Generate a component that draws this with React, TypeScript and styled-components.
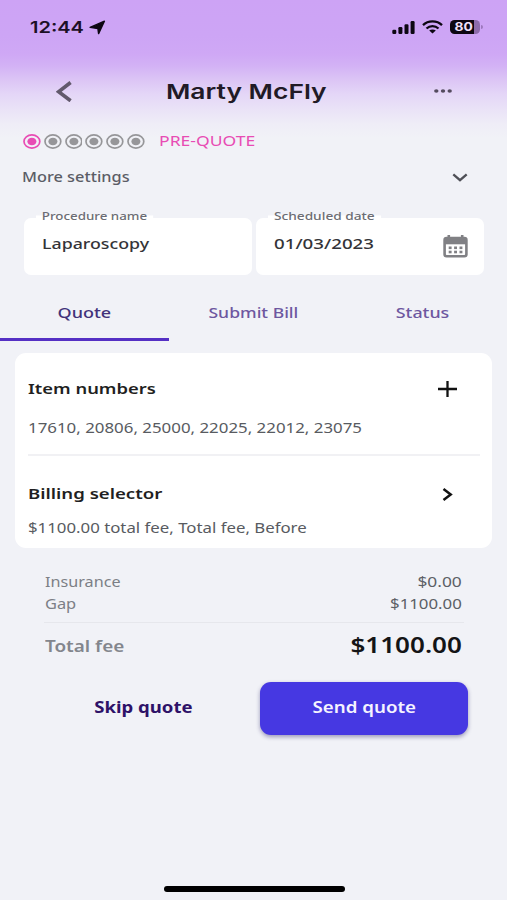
import React from 'react';
import styled, { createGlobalStyle, css } from 'styled-components';

const GlobalStyle = createGlobalStyle`
  *, *::before, *::after { box-sizing: border-box; }
  body { margin: 0; background: #f1f2f7; }
  button { appearance: none; border: 0; background: none; padding: 0; margin: 0; font: inherit; color: inherit; }
`;

const Screen = styled.main`
  display: flex;
  flex-direction: column;
  width: 507px;
  height: 900px;
  overflow: hidden;
  background: linear-gradient(
    180deg,
    #cda3f5 0, #cda5f5 36px, #cfa8f5 54px, #d3b2f5 66px, #dcc5f5 80px,
    #e4d6f7 94px, #eae3f7 110px, #efedf7 124px, #f1f2f7 138px
  );
  font-family: 'Noto Sans', 'Liberation Sans', sans-serif;
  color: #1b1a20;
`;

type WideProps = { $wide: number; $from?: 'left' | 'center' | 'right' };

const wide = css<WideProps>`
  display: inline-block;
  white-space: nowrap;
  transform: scaleX(${(p) => p.$wide});
  transform-origin: ${(p) => p.$from ?? 'left'} center;
`;

const StatusBar = styled.div`
  display: flex;
  align-items: center;
  justify-content: space-between;
  height: 54px;
  padding: 0 24px 0 30px;
`;

const Clock = styled.div`
  display: flex;
  align-items: center;
  width: 76px;
  justify-content: space-between;
`;

const Time = styled.span<WideProps>`
  ${wide}
  font: 600 16px/20px Inter, sans-serif;
  color: #1c1026;
`;

const Indicators = styled.div`
  display: flex;
  align-items: center;
  gap: 7px;
`;

const Header = styled.header`
  display: grid;
  grid-template-columns: 80px 1fr 80px;
  align-items: center;
  height: 74px;
  padding: 0 24px;

  svg { display: block; margin: 0 auto; }
`;

const IconButton = styled.button`
  display: block;
`;

const Title = styled.h1<WideProps>`
  ${wide}
  margin: 1px 14px 0 0;
  justify-self: center;
  font: 600 20.5px/28px Inter, sans-serif;
  color: #211a26;
`;

const Progress = styled.div`
  display: flex;
  align-items: center;
  gap: 3px;
  height: 26px;
  padding-left: 23px;
`;

const StageName = styled.span<WideProps>`
  ${wide}
  margin-left: 11px;
  font-size: 14px;
  line-height: 20px;
  color: #e84cb4;
`;

const Settings = styled.button`
  display: flex;
  align-items: center;
  justify-content: space-between;
  height: 46px;
  padding: 0 39px 0 22px;
`;

const SettingsLabel = styled.span<WideProps>`
  ${wide}
  font-size: 14px;
  font-weight: 500;
  line-height: 20px;
  color: #5b5d66;
`;

const Fields = styled.div`
  display: grid;
  grid-template-columns: 1fr 1fr;
  gap: 4px;
  padding: 18px 23px 0 24px;
`;

const Field = styled.div`
  display: flex;
  justify-content: space-between;
  height: 57px;
  padding: 0 16px 0 18px;
  border-radius: 7px;
  background: #fff;
`;

const FieldText = styled.div`
  display: flex;
  flex-direction: column;
  align-items: flex-start;
  margin-top: -10px;
`;

const FieldLabel = styled.span<WideProps>`
  ${wide}
  margin-left: -6px;
  padding: 0 5px;
  border-radius: 5px;
  background: linear-gradient(180deg, transparent 40%, #fff 52%);
  font-size: 11.5px;
  font-weight: 500;
  line-height: 16px;
  color: #6c6d74;
`;

const FieldValue = styled.span<WideProps>`
  ${wide}
  margin-top: 9px;
  font-size: 14.5px;
  font-weight: 500;
  line-height: 20px;
  color: #343438;
`;

const CalendarSlot = styled.span`
  display: flex;
  align-items: center;
`;

const Tabs = styled.nav`
  display: grid;
  grid-template-columns: repeat(3, 1fr);
  height: 66px;
`;

const Tab = styled.button<{ $active?: boolean }>`
  display: flex;
  align-items: center;
  justify-content: center;
  padding-top: 11px;
  border-bottom: 3px solid ${(p) => (p.$active ? '#5530c4' : 'transparent')};
  color: ${(p) => (p.$active ? '#42327a' : '#6d57a0')};
`;

const TabLabel = styled.span<WideProps>`
  ${wide}
  font-size: 15px;
  font-weight: 500;
  line-height: 20px;
`;

const Card = styled.section`
  margin: 12px 15px 0;
  height: 195px;
  padding: 0 12px 0 13px;
  border-radius: 11px;
  background: #fff;
`;

const Entry = styled.div<{ $top: number; $height: number; $gap: number }>`
  display: flex;
  flex-direction: column;
  gap: ${(p) => p.$gap}px;
  height: ${(p) => p.$height}px;
  padding-top: ${(p) => p.$top}px;

  & + & { border-top: 2px solid #f1f1f4; }
`;

const EntryHead = styled.div`
  display: flex;
  align-items: center;
  justify-content: space-between;
  height: 20px;
  padding-right: 23px;

  svg { margin-top: 2px; }
`;

const EntryTitle = styled.h2<WideProps>`
  ${wide}
  margin: 0;
  font-size: 15px;
  font-weight: 600;
  line-height: 20px;
  color: #1f1f22;
`;

const EntryDetail = styled.p<WideProps>`
  ${wide}
  margin: 0;
  align-self: flex-start;
  font-size: 14px;
  line-height: 20px;
  color: #585b61;
`;

const Summary = styled.section`
  display: flex;
  flex-direction: column;
  margin: 23px 43px 0 44px;
`;

const FeeLine = styled.div`
  display: flex;
  justify-content: space-between;
  height: 21.5px;
  padding: 0 2px 0 1px;
  font-size: 14px;
  line-height: 21px;
`;

const FeeName = styled.span<WideProps>`
  ${wide}
  color: #7c7f86;
`;

const FeeAmount = styled.span<WideProps>`
  ${wide}
  color: #5c5f66;
`;

const TotalLine = styled.div`
  display: flex;
  align-items: center;
  justify-content: space-between;
  height: 47px;
  margin-top: 8px;
  padding: 0 2px 0 1px;
  border-top: 1px solid #e6e7ec;
`;

const TotalName = styled.span<WideProps>`
  ${wide}
  font-size: 15.5px;
  font-weight: 600;
  line-height: 20px;
  color: #83868d;
`;

const TotalAmount = styled.strong<WideProps>`
  ${wide}
  margin-top: -2px;
  font-size: 21px;
  font-weight: 600;
  line-height: 28px;
  color: #141416;
`;

const Actions = styled.div`
  display: grid;
  grid-template-columns: 233px 208px;
  justify-content: end;
  margin: 13px 39px 0 0;
  height: 53px;
`;

const SkipButton = styled.button`
  color: #2e1268;
`;

const SendButton = styled.button`
  border-radius: 11px;
  background: #4638e2;
  color: #f5f3ff;
  box-shadow: 0 2px 4px rgba(50, 45, 110, 0.45);
`;

const ActionLabel = styled.span<WideProps & { $weight: number }>`
  ${wide}
  font-size: 16px;
  font-weight: ${(p) => p.$weight};
  line-height: 20px;
  padding-bottom: 5px;
`;

const HomeBar = styled.div`
  width: 181px;
  height: 6px;
  margin: auto auto 8px 164px;
  border-radius: 3px;
  background: #000;
`;

const LocationIcon = () => (
  <svg width="17" height="15" viewBox="0 0 17 15">
    <path d="M15.4 1.2 9.6 13.6 8.9 8.6 1.1 7.4Z" fill="#0d0712" stroke="#0d0712" strokeWidth="1.4" strokeLinejoin="round" />
  </svg>
);

const SignalIcon = () => (
  <svg width="23" height="13" viewBox="0 0 23 13" fill="#0d0712">
    <rect x="0.3" y="8.7" width="4" height="4.3" rx="1.2" />
    <rect x="6.4" y="6" width="4" height="7" rx="1.2" />
    <rect x="12.5" y="3.2" width="4" height="9.8" rx="1.2" />
    <rect x="18.6" y="0" width="4" height="13" rx="1.2" />
  </svg>
);

const WifiIcon = () => (
  <svg width="21" height="14" viewBox="0 0 21 14" fill="none" stroke="#0d0712" strokeWidth="2.3">
    <path d="M1 5.2C6.2.2 14.8.2 20 5.2" />
    <path d="M4.5 8.5c3.4-3.2 8.6-3.2 12 0" />
    <path d="M7.2 10.6c1.7-1.5 4.9-1.5 6.6 0L10.5 13.5Z" fill="#0d0712" stroke="none" />
  </svg>
);

const Battery = styled.div`
  display: flex;
  align-items: center;
  gap: 1px;

  &::after {
    content: '';
    width: 2px;
    height: 4px;
    border-radius: 0 2px 2px 0;
    background: #9c78bd;
  }
`;

const BatteryBody = styled.div`
  display: flex;
  align-items: center;
  justify-content: center;
  width: 30px;
  height: 14px;
  border-radius: 4.5px;
  background: linear-gradient(90deg, #0d0712 79%, #8d6cab 79%);
`;

const BatteryLevel = styled.span<WideProps>`
  ${wide}
  margin-right: 2px;
  font: 700 11.5px/14px Inter, sans-serif;
  color: #f0e2fc;
`;

const BackIcon = () => (
  <svg width="16" height="21" viewBox="0 0 16 21">
    <path d="M14.6 1.5 2.6 10.7 14.6 19.8" fill="none" stroke="#62596c" strokeWidth="3.6" />
  </svg>
);

const MoreIcon = () => (
  <svg width="18" height="4" viewBox="0 0 18 4" fill="#544b5e">
    <ellipse cx="2.3" cy="2" rx="2.2" ry="1.8" />
    <ellipse cx="9" cy="2" rx="2.2" ry="1.8" />
    <ellipse cx="15.7" cy="2" rx="2.2" ry="1.8" />
  </svg>
);

const StepDot = ({ active }: { active?: boolean }) => {
  const color = active ? '#e84cb4' : '#969699';
  return (
    <svg width="17.8" height="15" viewBox="0 0 17.8 15">
      <ellipse cx="8.9" cy="7.5" rx="7.9" ry="6.6" fill="none" stroke={color} strokeWidth="1.7" />
      <ellipse cx="8.9" cy="7.5" rx="4.5" ry="3.8" fill={color} />
    </svg>
  );
};

const ChevronDown = () => (
  <svg width="16" height="9" viewBox="0 0 16 9">
    <path d="m1.3 1.3 6.7 5.9 6.7-5.9" fill="none" stroke="#4f5057" strokeWidth="2.3" />
  </svg>
);

const CalendarIcon = () => (
  <svg width="25" height="23" viewBox="0 0 25 23">
    <path d="M5.8 0v4M19.2 0v4" stroke="#808084" strokeWidth="2.6" />
    <rect x="1.6" y="3" width="21.8" height="18.3" rx="2" fill="#fff" stroke="#808084" strokeWidth="2.6" />
    <path d="M1 3h23v6.3H1Z" fill="#808084" />
    <g fill="#808084">
      {[5.7, 11.1, 16.5].map((x) =>
        [11.5, 15.7].map((y) => <rect key={`${x}-${y}`} x={x} y={y} width="2.9" height="2.6" />),
      )}
    </g>
  </svg>
);

const PlusIcon = () => (
  <svg width="19" height="16" viewBox="0 0 19 16">
    <path d="M9.5 0v16M0 8h19" stroke="#111" strokeWidth="2.3" />
  </svg>
);

const ChevronSlot = styled.span`
  display: flex;
  margin-right: 4px;
`;

const ChevronRight = () => (
  <svg width="11" height="13" viewBox="0 0 11 13">
    <path d="m1.5 1 7.2 5.5-7.2 5.5" fill="none" stroke="#111" strokeWidth="2.5" />
  </svg>
);

export default function App() {
  return (
    <>
      <GlobalStyle />
      <Screen>
        <StatusBar>
          <Clock>
            <Time $wide={1.25}>12:44</Time>
            <LocationIcon />
          </Clock>
          <Indicators>
            <SignalIcon />
            <WifiIcon />
            <Battery>
              <BatteryBody>
                <BatteryLevel $wide={1.2} $from="center">80</BatteryLevel>
              </BatteryBody>
            </Battery>
          </Indicators>
        </StatusBar>

        <Header>
          <IconButton aria-label="Back"><BackIcon /></IconButton>
          <Title $wide={1.29} $from="center">Marty McFly</Title>
          <IconButton aria-label="More"><MoreIcon /></IconButton>
        </Header>

        <Progress>
          {[0, 1, 2, 3, 4, 5].map((step) => (
            <StepDot key={step} active={step === 0} />
          ))}
          <StageName $wide={1.255}>PRE-QUOTE</StageName>
        </Progress>

        <Settings>
          <SettingsLabel $wide={1.165}>More settings</SettingsLabel>
          <ChevronDown />
        </Settings>

        <Fields>
          <Field>
            <FieldText>
              <FieldLabel $wide={1.16}>Procedure name</FieldLabel>
              <FieldValue $wide={1.225}>Laparoscopy</FieldValue>
            </FieldText>
          </Field>
          <Field>
            <FieldText>
              <FieldLabel $wide={1.19}>Scheduled date</FieldLabel>
              <FieldValue $wide={1.29}>01/03/2023</FieldValue>
            </FieldText>
            <CalendarSlot><CalendarIcon /></CalendarSlot>
          </Field>
        </Fields>

        <Tabs>
          <Tab $active><TabLabel $wide={1.2} $from="center">Quote</TabLabel></Tab>
          <Tab><TabLabel $wide={1.17} $from="center">Submit Bill</TabLabel></Tab>
          <Tab><TabLabel $wide={1.19} $from="center">Status</TabLabel></Tab>
        </Tabs>

        <Card>
          <Entry $top={25} $height={101} $gap={20}>
            <EntryHead>
              <EntryTitle $wide={1.225}>Item numbers</EntryTitle>
              <PlusIcon />
            </EntryHead>
            <EntryDetail $wide={1.205}>17610, 20806, 25000, 22025, 22012, 23075</EntryDetail>
          </Entry>
          <Entry $top={27} $height={94} $gap={15}>
            <EntryHead>
              <EntryTitle $wide={1.24}>Billing selector</EntryTitle>
              <ChevronSlot><ChevronRight /></ChevronSlot>
            </EntryHead>
            <EntryDetail $wide={1.2}>$1100.00 total fee, Total fee, Before</EntryDetail>
          </Entry>
        </Card>

        <Summary>
          <FeeLine>
            <FeeName $wide={1.155}>Insurance</FeeName>
            <FeeAmount $wide={1.24} $from="right">$0.00</FeeAmount>
          </FeeLine>
          <FeeLine>
            <FeeName $wide={1.17}>Gap</FeeName>
            <FeeAmount $wide={1.2} $from="right">$1100.00</FeeAmount>
          </FeeLine>
          <TotalLine>
            <TotalName $wide={1.22}>Total fee</TotalName>
            <TotalAmount $wide={1.24} $from="right">$1100.00</TotalAmount>
          </TotalLine>
        </Summary>

        <Actions>
          <SkipButton><ActionLabel $wide={1.16} $from="center" $weight={700}>Skip quote</ActionLabel></SkipButton>
          <SendButton><ActionLabel $wide={1.17} $from="center" $weight={600}>Send quote</ActionLabel></SendButton>
        </Actions>

        <HomeBar />
      </Screen>
    </>
  );
}
